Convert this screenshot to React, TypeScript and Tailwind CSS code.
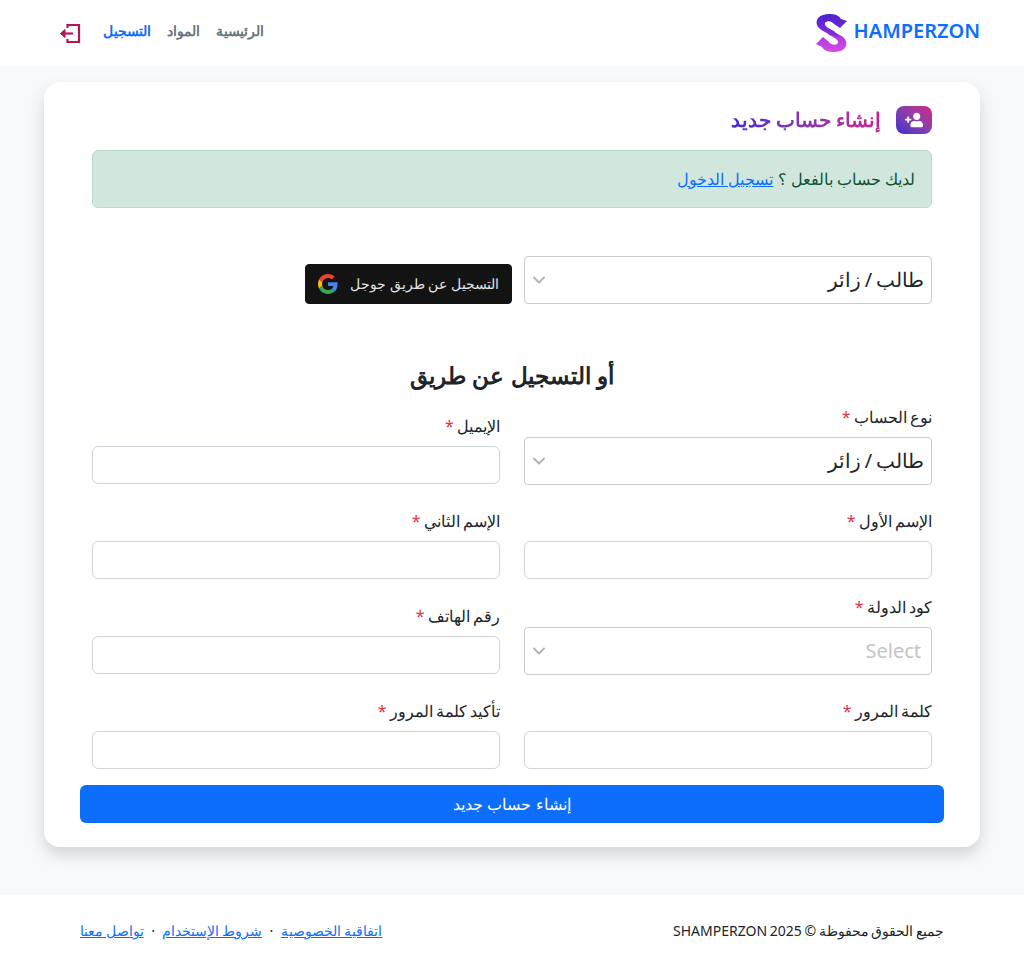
import { ChevronDown } from "lucide-react";
import { FaUserPlus } from "react-icons/fa";

const font = "font-[system-ui,sans-serif]";

function Logo() {
  return (
    <svg width="33" height="38" viewBox="0 0 33 38">
      <defs>
        <linearGradient id="logoTop" x1="0" y1="0" x2="0" y2="1">
          <stop offset="0" stopColor="#4a22c9" />
          <stop offset="1" stopColor="#8a2bdc" />
        </linearGradient>
        <linearGradient id="logoBottom" x1="0" y1="0" x2="0" y2="1">
          <stop offset="0" stopColor="#9a30dc" />
          <stop offset="1" stopColor="#d64ce6" />
        </linearGradient>
      </defs>
      <path
        d="M19 38C14 38 9 37 7 33L1 30 8 23 14 28C16 31 21 32 23 29 24 26 20 24 14 21L9 15C17 17 25 20 29 24 32 27 32 31 30 34 27 37 23 38 19 38z"
        fill="url(#logoBottom)"
      />
      <path
        d="M14 0C19 0 24 1 26 5L32 7 25 14 19 10C17 7 12 6 10 9 9 12 13 14 19 17L24 23C16 21 8 18 4 14 1 11 1 7 3 4 6 1 10 0 14 0z"
        fill="url(#logoTop)"
      />
    </svg>
  );
}

function GoogleG() {
  return (
    <svg width="20" height="20" viewBox="0 0 48 48">
      <path fill="#EA4335" d="M24 9.5c3.5 0 6.7 1.2 9.2 3.6l6.9-6.9C35.9 2.4 30.5 0 24 0 14.6 0 6.5 5.4 2.6 13.2l8 6.2C12.5 13.7 17.8 9.5 24 9.500z" />
      <path fill="#4285F4" d="M46.900 24.500c0-1.600-.1-3.100-.4-4.500H24v9h12.900c-.6 3-2.200 5.500-4.800 7.200l7.700 6c4.500-4.200 7.100-10.300 7.100-17.700z" />
      <path fill="#FBBC05" d="M10.500 28.600c-.5-1.400-.8-3-.8-4.600s.3-3.200.8-4.600l-8-6.200C.9 16.500 0 20.100 0 24s.9 7.500 2.600 10.800l7.900-6.200z" />
      <path fill="#34A853" d="M24 48c6.500 0 11.900-2.100 15.900-5.800l-7.700-6c-2.200 1.500-4.900 2.300-8.200 2.300-6.200 0-11.500-4.200-13.400-9.900l-8 6.200C6.500 42.600 14.600 48 24 48z" />
    </svg>
  );
}

function Select({ value }: { value?: string }) {
  return (
    <div className="flex h-12 items-center justify-between rounded-[4px] border border-[#cccccc] bg-white pr-2.5 pl-1">
      {value ? (
        <span className="-mr-[3px] text-xl text-[#212529] [word-spacing:-1.5px]">{value}</span>
      ) : (
        <span className="text-xl text-[#c4c4c4]">Select</span>
      )}
      <ChevronDown className="h-5 w-5 text-[#b3b3b3]" strokeWidth={2.25} />
    </div>
  );
}

function Field({ label, className }: { label: string; className: string }) {
  return (
    <div className={className}>
      <label className="mb-2 block text-base leading-6 text-[#212529] [word-spacing:-1px]">
        {label} <span className="text-[#dc3545]">*</span>
      </label>
      <input className="block h-[38px] w-full rounded-md border border-[#ced4da] bg-white" />
    </div>
  );
}

function SelectField({ label, value }: { label: string; value?: string }) {
  return (
    <div className="pb-6">
      <label className="mb-2 block text-base leading-6 text-[#212529] [word-spacing:-1px]">
        {label} <span className="text-[#dc3545]">*</span>
      </label>
      <Select value={value} />
    </div>
  );
}

export default function App() {
  return (
    <div dir="rtl" className={`${font} min-h-[967px] bg-[#f8f9fa] text-[#212529]`}>
      <header className="flex h-[66px] items-center justify-between bg-white pr-11 pl-[59px]">
        <div className="flex items-center gap-1.5">
          <span dir="ltr" className="pb-1 text-[20px] font-semibold text-[#0d6efd]">HAMPERZON</span>
          <Logo />
        </div>
        <nav className="flex items-center gap-4 text-sm font-bold">
          <a className="pb-1 text-[#6c757d]">الرئيسية</a>
          <a className="pb-1 text-[#6c757d]">المواد</a>
          <a className="pb-1 text-[#0d6efd]">التسجيل</a>
          <svg className="mr-1.5 text-[#b5135a]" width="22" height="22" viewBox="0 0 22 22" fill="none" stroke="currentColor" strokeWidth="2.2">
            <path d="M8.500 6V3h11.500v17H8.500v-3" />
            <path d="M14 11.500H5" />
            <path d="M6 7.500 1.500 11.500 6 15.500z" fill="currentColor" strokeWidth="1" />
          </svg>
        </nav>
      </header>

      <main className="mx-11 mt-4 rounded-2xl bg-white px-12 pt-6 pb-6 shadow-[0_8px_16px_rgba(0,0,0,0.15)]">
        <div className="flex items-center gap-[15px]">
          <span className="flex h-7 w-9 items-center justify-center rounded-lg bg-gradient-to-tr from-[#3f2bd0] to-[#cf1f84] text-white">
            <FaUserPlus className="h-[18px] w-[18px] -scale-x-100" />
          </span>
          <h1 className="bg-gradient-to-r from-[#4a25cc] to-[#c81f8f] bg-clip-text text-[19.6px] leading-7 font-bold text-transparent">
            إنشاء حساب جديد
          </h1>
        </div>

        <div className="mt-4 rounded-md border border-[#badbcc] bg-[#d1e7dd] p-4 leading-6 text-[#0f5132]">
          لديك حساب بالفعل ؟ <a className="text-[#0d6efd] underline">تسجيل الدخول</a>
        </div>

        <div className="mt-12 grid grid-cols-2 items-end gap-x-6">
          <Select value="طالب / زائر" />
          <div className="-mr-3">
            <button className="flex h-10 w-[207px] items-center justify-between rounded-[4px] border border-[#131314] bg-[#131314] px-3 text-sm text-[#e3e3e3]">
              <span>التسجيل عن طريق جوجل</span>
              <GoogleG />
            </button>
          </div>
        </div>

        <h2 className="mt-[53px] mb-3 text-center text-[23.4px] leading-9 font-bold">أو التسجيل عن طريق</h2>

        <div className="grid grid-cols-2 items-end gap-x-6">
          <SelectField label="نوع الحساب" value="طالب / زائر" />
          <Field label="الإيميل" className="pb-[25px]" />
          <Field label="الإسم الأول" className="pb-4" />
          <Field label="الإسم الثاني" className="pb-4" />
          <SelectField label="كود الدولة" />
          <Field label="رقم الهاتف" className="pb-[25px]" />
          <Field label="كلمة المرور" className="pb-4" />
          <Field label="تأكيد كلمة المرور" className="pb-4" />
        </div>

        <button className="-mx-3 block h-[38px] w-[calc(100%+24px)] rounded-md bg-[#0d6efd] text-center text-base text-white">
          إنشاء حساب جديد
        </button>
      </main>

      <footer className="mt-12 flex h-[72px] items-center justify-between bg-white px-20 text-sm">
        <span className="[word-spacing:-1px]">جميع الحقوق محفوظة © SHAMPERZON 2025</span>
        <div className="flex items-center gap-[7.5px] text-[#0d6efd]">
          <a className="underline">اتفاقية الخصوصية</a>
          <span className="text-[#212529]">·</span>
          <a className="underline [word-spacing:-1px]">شروط الإستخدام</a>
          <span className="text-[#212529]">·</span>
          <a className="underline [word-spacing:-1px]">تواصل معنا</a>
        </div>
      </footer>
    </div>
  );
}
